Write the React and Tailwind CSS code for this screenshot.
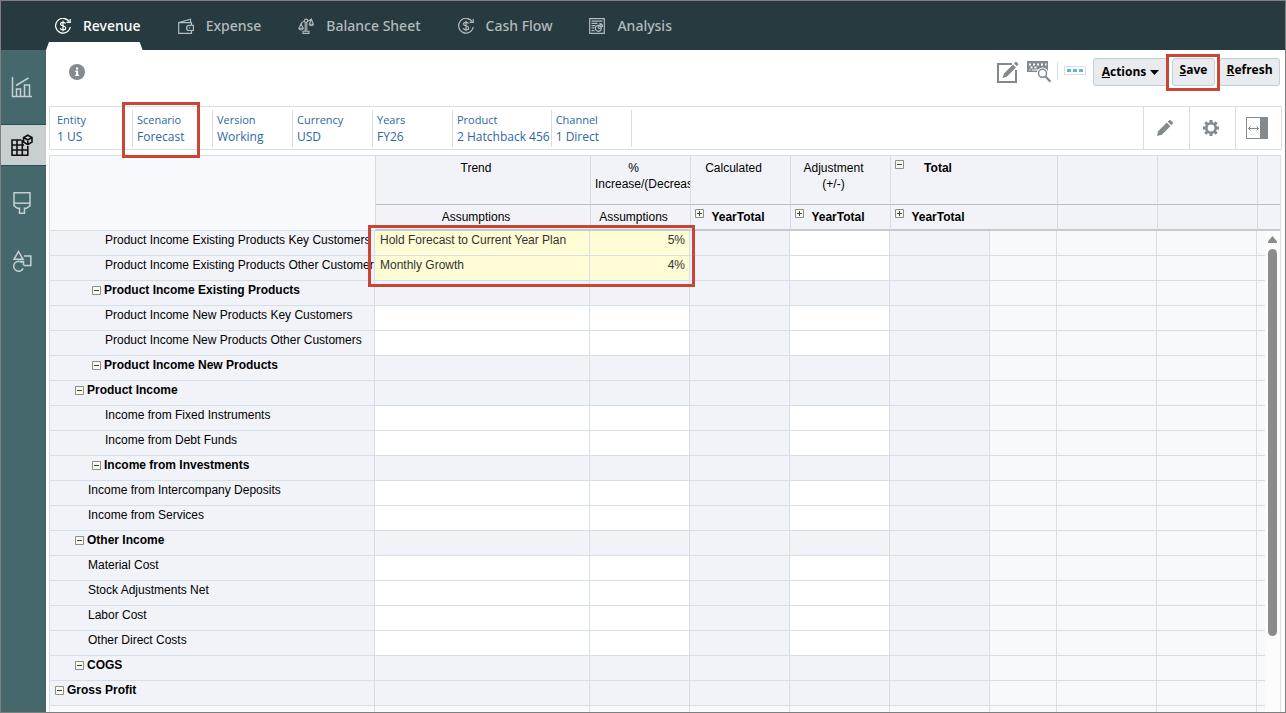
import clsx from 'clsx';

const tabs = [
  { label: 'Revenue', icon: CoinIcon, active: true },
  { label: 'Expense', icon: WalletIcon },
  { label: 'Balance Sheet', icon: ScaleIcon },
  { label: 'Cash Flow', icon: CoinIcon },
  { label: 'Analysis', icon: ReportIcon },
];

const dimensions = [
  { label: 'Entity', value: '1 US' },
  { label: 'Scenario', value: 'Forecast', marked: true },
  { label: 'Version', value: 'Working' },
  { label: 'Currency', value: 'USD' },
  { label: 'Years', value: 'FY26' },
  { label: 'Product', value: '2 Hatchback 456' },
  { label: 'Channel', value: '1 Direct' },
];

const rows = [
  { label: 'Product Income Existing Products Key Customers', level: 3, trend: 'Hold Forecast to Current Year Plan', pct: '5%', marked: true },
  { label: 'Product Income Existing Products Other Customers', level: 3, trend: 'Monthly Growth', pct: '4%' },
  { label: 'Product Income Existing Products', level: 3, parent: true },
  { label: 'Product Income New Products Key Customers', level: 3 },
  { label: 'Product Income New Products Other Customers', level: 3 },
  { label: 'Product Income New Products', level: 3, parent: true },
  { label: 'Product Income', level: 2, parent: true },
  { label: 'Income from Fixed Instruments', level: 3 },
  { label: 'Income from Debt Funds', level: 3 },
  { label: 'Income from Investments', level: 3, parent: true },
  { label: 'Income from Intercompany Deposits', level: 2 },
  { label: 'Income from Services', level: 2 },
  { label: 'Other Income', level: 2, parent: true },
  { label: 'Material Cost', level: 2 },
  { label: 'Stock Adjustments Net', level: 2 },
  { label: 'Labor Cost', level: 2 },
  { label: 'Other Direct Costs', level: 2 },
  { label: 'COGS', level: 2, parent: true },
  { label: 'Gross Profit', level: 1, parent: true },
];

const parentIndent = { 1: 'pl-[5px]', 2: 'pl-[25px]', 3: 'pl-[42px]' };
const leafIndent = { 1: 'pl-[18px]', 2: 'pl-[38px]', 3: 'pl-[55px]' };

/* ---------- icons ---------- */

function CoinIcon() {
  return (
    <svg width="16" height="16" viewBox="0 0 16 16" fill="none" stroke="currentColor" strokeWidth="1.2">
      <path d="M14.2 3.6A7.4 7.4 0 1 0 15.3 9" />
      <path d="M15.2 1v3.4h-3.6" />
      <path d="M10.6 5.6C10.2 4.7 9.2 4.3 8 4.3c-1.5 0-2.5.7-2.5 1.8C5.5 8.6 10.7 7.3 10.7 9.9c0 1.2-1.1 1.9-2.7 1.9-1.3 0-2.4-.5-2.8-1.5M8 2.7v10.6" />
    </svg>
  );
}

function WalletIcon() {
  return (
    <svg width="16" height="16" viewBox="0 0 16 16" fill="none" stroke="currentColor" strokeWidth="1.2">
      <path d="M13.5 7V4.6H.7v10.7h12.8V12.6" />
      <path d="M.7 4.6 12.5 1.2v3.2" />
      <path d="M15.4 7.3h-4.2a2.6 2.6 0 0 0 0 5.2h4.2z" />
      <path d="M11 9.9h1.2" />
    </svg>
  );
}

function ScaleIcon() {
  return (
    <svg width="16" height="16" viewBox="0 0 16 16" fill="none" stroke="currentColor" strokeWidth="1.1">
      <circle cx="8" cy="2.8" r="1.7" />
      <path d="M7.2 4.5v8.7M8.8 4.5v8.7M5 15.4h6v-2.1H5z" />
      <path d="M6.3 3.2C4.5 3.5 3.5 4.5 3 6M9.7 2.8c1.5.2 2.5-.3 3.5-1.6" />
      <path d="M3 6 .8 10.3h4.4zM.8 10.3c.2 2.2 4.2 2.2 4.4 0" />
      <path d="M13.4 1.2l-2 5h4zM11.4 6.2c.2 2 3.8 2 4 0" />
    </svg>
  );
}

function ReportIcon() {
  return (
    <svg width="16" height="16" viewBox="0 0 16 16" fill="none" stroke="currentColor" strokeWidth="1.2">
      <path d="M.7.7h14.6v14.6H.7z" />
      <path d="M2.5 3.2h11M2.5 5.4h6M2.5 7.6h4M2.5 9.8h3M2.5 12.6h3" />
      <circle cx="9.3" cy="10.3" r="3" />
      <path d="M9.3 10.3V8M9.3 10.3h2.3M11 5.6a3 3 0 0 1 2.6 2.7H11z" />
    </svg>
  );
}

function InfoIcon() {
  return (
    <svg width="16" height="16" viewBox="0 0 16 16">
      <circle cx="8" cy="8" r="8" fill="#858a8e" />
      <path d="M7 3.5h2.2v1.9H7zM6.2 6.6h3v4.2h.9v1.3H6.1v-1.3H7V7.9h-.8z" fill="#fff" />
    </svg>
  );
}

function ChartIcon() {
  return (
    <svg width="22" height="22" viewBox="0 0 22 22" fill="none" stroke="#c6cfd1" strokeWidth="1.5">
      <path d="M1.5 1v19.5H21" />
      <path d="M5.5 20v-7h4v7M13.5 20V9h5v11" />
      <path d="M5 9.5 17.5 2" />
    </svg>
  );
}

function GridCubeIcon() {
  return (
    <svg width="22" height="22" viewBox="0 0 22 22" fill="none" stroke="#111" strokeWidth="1.6">
      <path d="M10.5 6H1v15.2h15.8V12" />
      <path d="M6 6v15M11.3 6v15M1 11h12M1 16h16" />
      <path d="M16.8 1.2 21 3.5v4.6l-4.2 2.4-4.2-2.4V3.5zM12.6 3.5l4.2 2.4L21 3.5M16.8 5.9v4.6" />
    </svg>
  );
}

function BrushIcon() {
  return (
    <svg width="22" height="22" viewBox="0 0 22 22" fill="none" stroke="#c6cfd1" strokeWidth="1.5">
      <path d="M3 .8h16v13l-3.5 2.5h-2v5h-5v-5h-2L3 13.8z" />
      <path d="M3 11.2h16" />
    </svg>
  );
}

function ShapesIcon() {
  return (
    <svg width="22" height="22" viewBox="0 0 22 22" fill="none" stroke="#c6cfd1" strokeWidth="1.5">
      <path d="M7.5 1.5 12 9.3H3z" />
      <path d="M13 6h6.8v9.5H13" />
      <path d="M11.2 12.6a5 5 0 1 0 1 5.8M7.5 11.5h5v4" />
    </svg>
  );
}

function EditFormIcon() {
  return (
    <svg width="22" height="22" viewBox="0 0 22 22" fill="none">
      <path d="M15 3H1v18h18V9" stroke="#83898d" strokeWidth="2" />
      <path d="M5.5 17l1.3-4.3L16 3.5l3 3-9.2 9.2z" fill="#83898d" />
      <path d="M17 2.5 19 .6l2.6 2.6-2 1.9z" fill="#83898d" />
    </svg>
  );
}

function KeyboardSearchIcon() {
  return (
    <svg width="24" height="22" viewBox="0 0 24 22" fill="none">
      <path d="M0 0h21v11H0z" fill="#83898d" />
      <path d="M2 2.5h2v2H2zM6 2.5h2v2H6zM10 2.5h2v2h-2zM14 2.5h2v2h-2zM18 2.5h1.5v2H18zM3.5 5.5h2v2h-2zM7.5 5.5h2v2h-2zM2 8.5h1.5v1H2zM5 8.5h6v1H5z" fill="#fff" />
      <circle cx="15.5" cy="12.3" r="5.8" fill="#fff" />
      <circle cx="15.5" cy="12.3" r="4" stroke="#83898d" strokeWidth="1.5" />
      <path d="m18.5 15.5 5 5.3" stroke="#83898d" strokeWidth="2.2" />
    </svg>
  );
}

function PencilIcon() {
  return (
    <svg width="16" height="16" viewBox="0 0 16 16" fill="#83898d">
      <path d="M0 16l1.2-4.8 8.6-8.6 3.6 3.6-8.6 8.6z" />
      <path d="M10.7 1.7 12 .5c.6-.6 1.3-.6 1.9 0l1.6 1.6c.6.6.6 1.3 0 1.9l-1.2 1.3z" />
    </svg>
  );
}

function GearIcon() {
  return (
    <svg width="16" height="16" viewBox="0 0 16 16" fill="none" stroke="#83898d">
      <circle cx="8" cy="8" r="4.7" strokeWidth="2.6" />
      <path d="M8 0v3M8 13v3M0 8h3M13 8h3M2.3 2.3l2.2 2.2M11.5 11.5l2.2 2.2M2.3 13.7l2.2-2.2M11.5 4.5l2.2-2.2" strokeWidth="3" />
    </svg>
  );
}

function PanelIcon() {
  return (
    <svg width="22" height="22" viewBox="0 0 22 22" fill="none">
      <path d="M.5.5h21v21H.5z" stroke="#83898d" />
      <path d="M14 0h8v22h-8z" fill="#83898d" />
      <path d="M2.5 11.5h10M4.5 9.5l-2 2 2 2M10.5 9.5l2 2-2 2" stroke="#83898d" />
    </svg>
  );
}

/* ---------- pieces ---------- */

function Toggle({ open, label }) {
  return (
    <button type="button" aria-label={`${open ? 'Collapse' : 'Expand'} ${label}`} className="block shrink-0">
      <svg className="block" width="9" height="9" viewBox="0 0 9 9">
        <path d="M.5.5h8v8h-8z" fill="#f8f8ee" stroke="#8c8f88" />
        <path d={open ? 'M2 4.5h5' : 'M2 4.5h5M4.5 2v5'} stroke="#444" />
      </svg>
    </button>
  );
}

function Callout({ className }) {
  return <span aria-hidden="true" className={clsx('absolute z-10 border-3 border-[#c84632] pointer-events-none', className)} />;
}

function HeadCell({ children, toggle, bold, top, noLine }) {
  return (
    <th
      scope="col"
      className={clsx(
        'bg-[#f2f3f8] p-0 align-top overflow-hidden',
        !noLine && 'border-l border-l-[#d5dde3]',
        top ? 'border-b border-b-[#b9bcc0]' : 'border-b-2 border-b-[#c6cace]',
        bold ? 'font-bold' : 'font-normal',
      )}
    >
      {children && (
        <div className="flex items-start pt-1 pl-1 pr-[18px]">
          {toggle && <Toggle open={toggle === 'open'} label={children} />}
          <div className="flex-1 min-w-0 text-center">{children}</div>
        </div>
      )}
    </th>
  );
}

function GridRow({ row }) {
  const { label, level, parent, trend, pct, marked } = row;
  const line = 'border-b border-r border-[#d5dfe6] p-0 align-top';
  const input = parent ? 'bg-[#f2f3f8]' : trend ? 'bg-[#fffcd6]' : 'bg-white';

  return (
    <tr className="h-[25px]">
      <th scope="row" className={clsx(line, 'bg-[#f2f3f8] text-left overflow-hidden', parent ? 'font-bold' : 'font-normal')}>
        <div className={clsx('flex items-center gap-[3px] pt-px whitespace-nowrap', parent ? parentIndent[level] : leafIndent[level])}>
          {parent && <Toggle open label={label} />}
          <span>{label}</span>
        </div>
      </th>
      <td className={clsx(line, input, 'relative text-[#333]')}>
        {trend && <div className="pt-px pl-[5px]">{trend}</div>}
        {marked && <Callout className="-top-[6px] -left-[7px] w-[327px] h-[62px]" />}
      </td>
      <td className={clsx(line, input, 'text-[#333]')}>{pct && <div className="pt-px pr-1 text-right">{pct}</div>}</td>
      <td className={clsx(line, 'bg-[#f2f3f8]')} />
      <td className={clsx(line, parent ? 'bg-[#f2f3f8]' : 'bg-white')} />
      <td className={clsx(line, 'bg-[#f2f3f8]')} />
      <td className={clsx(line, 'bg-[#f8f9fd]')} />
      <td className={clsx(line, 'bg-[#f8f9fd]')} />
      <td className={clsx(line, 'bg-[#f8f9fd]')} />
      <td className={clsx(line, 'bg-[#f8f9fd]')} />
    </tr>
  );
}

function DataGrid() {
  return (
    <div className="relative flex-1 min-h-0 mt-[5px] mr-px border border-b-0 border-[#d5dfe6] overflow-hidden">
      <table className="w-full table-fixed border-separate border-spacing-0 font-['Liberation_Sans',Arial,sans-serif] text-xs leading-4 text-black">
        <colgroup>
          <col className="w-[325px]" />
          <col className="w-[215px]" />
          <col className="w-[100px]" />
          <col className="w-[100px]" />
          <col className="w-[100px]" />
          <col className="w-[100px]" />
          <col className="w-[67px]" />
          <col className="w-[100px]" />
          <col className="w-[100px]" />
          <col />
        </colgroup>
        <thead>
          <tr className="h-[49px]">
            <td rowSpan={2} className="bg-[#f8f9fd] border-b border-[#d5dfe6]" />
            <HeadCell top>Trend</HeadCell>
            <HeadCell top>% Increase/(Decrease)</HeadCell>
            <HeadCell top>Calculated</HeadCell>
            <HeadCell top>Adjustment (+/-)</HeadCell>
            <HeadCell top bold toggle="open">Total</HeadCell>
            <HeadCell top noLine />
            <HeadCell top />
            <HeadCell top />
            <HeadCell top />
          </tr>
          <tr className="h-[26px]">
            <HeadCell>Assumptions</HeadCell>
            <HeadCell>Assumptions</HeadCell>
            <HeadCell bold toggle="closed">YearTotal</HeadCell>
            <HeadCell bold toggle="closed">YearTotal</HeadCell>
            <HeadCell bold toggle="closed">YearTotal</HeadCell>
            <HeadCell noLine />
            <HeadCell />
            <HeadCell />
            <HeadCell />
          </tr>
        </thead>
        <tbody>
          {rows.map((row) => (
            <GridRow key={row.label} row={row} />
          ))}
          <tr className="h-[25px]">
            {Array.from({ length: 10 }, (_, i) => (
              <td key={i} className="bg-[#f8f9fd] border-r border-[#d5dfe6]" />
            ))}
          </tr>
        </tbody>
      </table>

      {/* Scroll bar */}
      <div aria-hidden="true" className="absolute top-[75px] right-0 bottom-0 w-[15px] bg-[#fcfcfc] flex flex-col items-center pt-[5px]">
        <svg width="9" height="7" viewBox="0 0 9 7">
          <path d="M4.5 0 9 5.5V7H0V5.5z" fill="#8b8b8b" />
        </svg>
        <div className="mt-[6px] w-[9px] h-5/6 max-h-[387px] rounded-full bg-[#8b8b8b]" />
      </div>
    </div>
  );
}

function Toolbar() {
  const btn = 'h-7 rounded-[3px] border border-[#c3ced8] bg-[#e8ecee] font-bold text-xs text-black whitespace-nowrap';
  return (
    <div className="h-14 shrink-0 flex items-start justify-between pt-2 pl-5 pr-[2px]">
      <button type="button" aria-label="Information" className="mt-[6px]">
        <InfoIcon />
      </button>
      <div className="flex items-start">
        <button type="button" aria-label="Edit form" className="mt-[3px]"><EditFormIcon /></button>
        <button type="button" aria-label="Search data" className="mt-[3px] ml-2"><KeyboardSearchIcon /></button>
        <div className="ml-[6px] mt-1 w-px h-[17px] bg-[#d5dfe6]" />
        <button type="button" aria-label="More" className="ml-[6px] mt-2 w-[22px] h-[9px] border border-[#d5dfe6] flex items-center justify-center gap-[2px]">
          <span className="w-1 h-[3px] bg-[#62b0e8]" />
          <span className="w-1 h-[3px] bg-[#62b0e8]" />
          <span className="w-1 h-[3px] bg-[#62b0e8]" />
        </button>
        <button type="button" className={clsx(btn, 'ml-[7px] w-[75px] flex items-center justify-center gap-1')}>
          <span><u>A</u>ctions</span>
          <svg width="9" height="5" viewBox="0 0 9 5"><path d="M0 0h9L4.5 5z" /></svg>
        </button>
        <div className="relative ml-1">
          <button type="button" className={clsx(btn, 'w-[43px] pb-1 block')}><u>S</u>ave</button>
          <Callout className="-top-1 -left-[6px] w-[54px] h-[37px]" />
        </div>
        <button type="button" className={clsx(btn, 'ml-1 w-[61px] pb-1')}><u>R</u>efresh</button>
      </div>
    </div>
  );
}

function PointOfView() {
  const tool = 'w-[46px] pr-1 border-l border-[#d5dfe6] flex items-center justify-center';
  return (
    <div className="h-11 shrink-0 flex justify-between border border-[#d5dfe6]">
      <div className="flex pl-[3px] pt-[3px] pb-[2px]">
        {dimensions.map(({ label, value, marked }) => (
          <div key={label} className="relative min-w-20 pl-1 pr-px pt-[2px] border-r border-[#d5dfe6] text-[#2d67a5] whitespace-nowrap">
            <div className="text-[11px] leading-4">{label}</div>
            <a href="#" className="block text-xs leading-[18px]">{value}</a>
            {marked && <Callout className="-top-[8px] -left-[11px] w-[78px] h-[56px]" />}
          </div>
        ))}
      </div>
      <div className="flex">
        <button type="button" aria-label="Edit" className={tool}><PencilIcon /></button>
        <button type="button" aria-label="Settings" className={tool}><GearIcon /></button>
        <button type="button" aria-label="Toggle panel" className={tool}><PanelIcon /></button>
      </div>
    </div>
  );
}

export default function App() {
  return (
    <div className="h-screen flex flex-col overflow-hidden border border-[#7f7f7f] bg-white font-['Open_Sans','Noto_Sans',sans-serif]">
      <header className="h-[49px] shrink-0 bg-[#263a40]">
        <nav className="h-full flex gap-[37px] pl-[54px]">
          {tabs.map(({ label, icon: Icon, active }) => (
            <a
              key={label}
              href="#"
              className={clsx('relative flex items-center gap-3 font-["Noto_Sans","Open_Sans",sans-serif] text-sm font-medium whitespace-nowrap', active ? 'text-white' : 'text-[#b3babc]')}
            >
              <Icon />
              {label}
              {active && (
                <span className="absolute bottom-0 -left-[9px] -right-[2px] h-2 bg-white [clip-path:polygon(3px_0,calc(100%-3px)_0,100%_100%,0_100%)]" />
              )}
            </a>
          ))}
        </nav>
      </header>

      <div className="flex-1 min-h-0 flex">
        <aside className="w-[45px] shrink-0 bg-[#45686d] flex flex-col">
          <a href="#" aria-label="Dashboards" className="h-[74px] flex items-center justify-center pr-1"><ChartIcon /></a>
          <a href="#" aria-label="Forms" className="h-[42px] flex items-center justify-center pr-1 bg-[#c7cfd1] border-y border-[#2f4a50]"><GridCubeIcon /></a>
          <a href="#" aria-label="Rules" className="h-[74px] flex items-center justify-center pr-1"><BrushIcon /></a>
          <a href="#" aria-label="Infolets" className="h-[42px] flex items-center justify-center pr-1"><ShapesIcon /></a>
        </aside>

        <main className="flex-1 min-w-0 flex flex-col px-[3px]">
          <Toolbar />
          <PointOfView />
          <DataGrid />
        </main>
      </div>
    </div>
  );
}
